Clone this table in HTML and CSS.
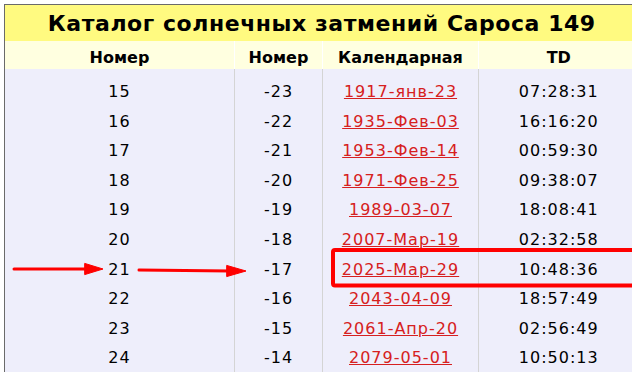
FILE: index.html
```html
<!DOCTYPE html>
<html lang="ru">
<head>
<meta charset="utf-8">
<title>Каталог солнечных затмений Сароса 149</title>
<link rel="stylesheet" href="styles.css">
</head>
<body>
<div class="wrap">
  <table class="catalog">
    <colgroup>
      <col class="c1"><col class="c2"><col class="c3"><col class="c4">
    </colgroup>
    <thead>
      <tr class="title-row"><th colspan="4">Каталог солнечных затмений Сароса 149</th></tr>
      <tr class="head-row"><th>Номер</th><th>Номер</th><th>Календарная</th><th>TD</th></tr>
    </thead>
    <tbody>
      <tr class="first"><td>15</td><td>-23</td><td><a href="#">1917-янв-23</a></td><td>07:28:31</td></tr>
      <tr><td>16</td><td>-22</td><td><a href="#">1935-Фев-03</a></td><td>16:16:20</td></tr>
      <tr><td>17</td><td>-21</td><td><a href="#">1953-Фев-14</a></td><td>00:59:30</td></tr>
      <tr><td>18</td><td>-20</td><td><a href="#">1971-Фев-25</a></td><td>09:38:07</td></tr>
      <tr><td>19</td><td>-19</td><td><a href="#">1989-03-07</a></td><td>18:08:41</td></tr>
      <tr><td>20</td><td>-18</td><td><a href="#">2007-Мар-19</a></td><td>02:32:58</td></tr>
      <tr><td>21</td><td>-17</td><td><a href="#">2025-Мар-29</a></td><td>10:48:36</td></tr>
      <tr><td>22</td><td>-16</td><td><a href="#">2043-04-09</a></td><td>18:57:49</td></tr>
      <tr><td>23</td><td>-15</td><td><a href="#">2061-Апр-20</a></td><td>02:56:49</td></tr>
      <tr><td>24</td><td>-14</td><td><a href="#">2079-05-01</a></td><td>10:50:13</td></tr>
    </tbody>
  </table>
  <svg class="marks" width="632" height="373" viewBox="0 0 632 373" aria-hidden="true">
    <g fill="#ff0000" stroke="#ff0000" stroke-linecap="round" stroke-linejoin="round">
      <line x1="14" y1="269" x2="88" y2="269" stroke-width="3"/>
      <polygon points="85,263.5 103,269 85,274.5" stroke-width="1"/>
      <line x1="139" y1="270" x2="230" y2="271" stroke-width="3"/>
      <polygon points="227,265.5 246,271 227,276.5" stroke-width="1"/>
    </g>
    <rect x="333" y="250" width="310" height="35.5" rx="2" fill="none" stroke="#ff0000" stroke-width="4"/>
  </svg>
</div>
</body>
</html>
```
FILE: styles.css
```css
html, body {
  margin: 0;
  padding: 0;
  background: #ffffff;
  overflow: hidden;
}
body {
  padding: 4px 0 0 4px;
  font-family: "DejaVu Sans", Verdana, sans-serif;
  color: #000;
}
.wrap {
  position: relative;
  width: 628px;
  height: 369px;
  overflow: hidden;
}
.catalog {
  border-collapse: collapse;
  table-layout: fixed;
  width: 634px;
  border-top: 1px solid #6a6a6a;
  border-left: 1px solid #6a6a6a;
}
.c1 { width: 230px; }
.c2 { width: 88px; }
.c3 { width: 156px; }
.c4 { width: 160px; }

.title-row th {
  background: #fffa80;
  height: 36px;
  padding: 0;
  font-size: 22px;
  font-weight: bold;
  letter-spacing: 0.55px;
  text-align: center;
  vertical-align: middle;
}
.head-row th {
  background: #ffffe0;
  height: 24px;
  padding: 4px 0 0;
  font-size: 16px;
  font-weight: bold;
  text-align: center;
  vertical-align: middle;
  border-left: 1px solid #ffffff;
}
.head-row th:first-child { border-left: none; }

tbody td {
  background: #eeeefb;
  height: 29.56px;
  padding: 0;
  font-size: 16px;
  letter-spacing: 1px;
  text-align: center;
  vertical-align: middle;
  border-left: 1px solid #d4d4d4;
}
tbody td:first-child { border-left: none; }
tbody tr.first td {
  padding-top: 8px;
}
tbody a {
  color: #d62020;
  text-decoration: underline;
}
.marks {
  position: absolute;
  left: -4px;
  top: -4px;
  pointer-events: none;
}
```
